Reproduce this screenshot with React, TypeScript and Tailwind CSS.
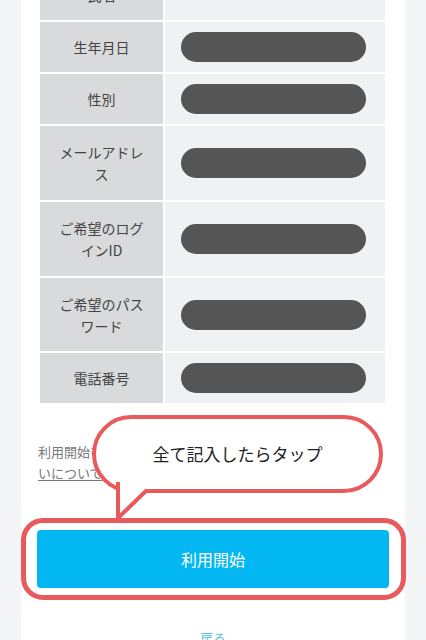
import React from "react";

const rows: { label: string; h: string; pill: boolean }[] = [
  { label: "氏名", h: "h-[50px]", pill: false },
  { label: "生年月日", h: "h-[50px]", pill: true },
  { label: "性別", h: "h-[50px]", pill: true },
  { label: "メールアドレス", h: "h-[74px]", pill: true },
  { label: "ご希望のログインID", h: "h-[74px]", pill: true },
  { label: "ご希望のパスワード", h: "h-[73px]", pill: true },
  { label: "電話番号", h: "h-[50px]", pill: true },
];

export default function App() {
  return (
    <div
      className="relative h-[640px] w-full overflow-hidden bg-[#f4f5f7]"
      style={{ fontFamily: '"Noto Sans CJK JP", "Noto Sans", sans-serif' }}
    >
      <div className="mx-[21px] min-h-full bg-white">
        <div className="-mt-[30px] flex flex-col gap-[2px] pl-[19px] pr-[20px]">
          {rows.map((r, i) => (
            <div key={i} className={`flex gap-[2px] ${r.h}`}>
              <div className="flex w-[123px] shrink-0 items-center justify-center bg-[#d9dadc] px-[14px] text-center text-[14px] leading-[22px] text-[#444]">
                {r.label}
              </div>
              <div className="flex flex-1 items-center bg-[#f0f1f3] pl-[16px]">
                {r.pill && <div className="h-[30px] w-[185px] rounded-full bg-[#555555]" />}
              </div>
            </div>
          ))}
        </div>

        <div className="mt-[38px] px-[17px] text-[13px] leading-[21px] text-[#777]">
          <p className="overflow-hidden whitespace-nowrap">利用開始をタップすると、利用規約と個人情報の取り扱</p>
          <p className="overflow-hidden whitespace-nowrap">
            <span className="underline underline-offset-2">いについて</span>同意したものとみなします。
          </p>
        </div>

        <div className="mt-[47px] px-[16px]">
          <button className="flex h-[58px] w-full items-center justify-center rounded-[4px] bg-[#03b8f2] text-[16px] text-white">
            利用開始
          </button>
        </div>

        <div className="mt-[40px] text-center text-[13px] leading-[20px] text-[#5bbde8]">戻る</div>
      </div>

      {/* red frame around the button */}
      <div className="absolute left-[21px] top-[518px] h-[82px] w-[385px] rounded-[22px] border-[5px] border-[#e95a5d]" />

      {/* speech bubble */}
      <div className="absolute left-[92px] top-[415px] flex h-[78px] w-[291px] items-center justify-center rounded-full border-[4px] border-[#e95a5d] bg-white text-[17px] text-[#222]">
        全て記入したらタップ
      </div>
      <svg className="absolute left-0 top-0" width="426" height="640" viewBox="0 0 426 640">
        <polygon points="120,470 120,513 150,486" fill="#ffffff" />
        <polyline
          points="118,482 118,518 147,490"
          fill="none"
          stroke="#e95a5d"
          strokeWidth="4"
          strokeLinejoin="miter"
        />
      </svg>
    </div>
  );
}
